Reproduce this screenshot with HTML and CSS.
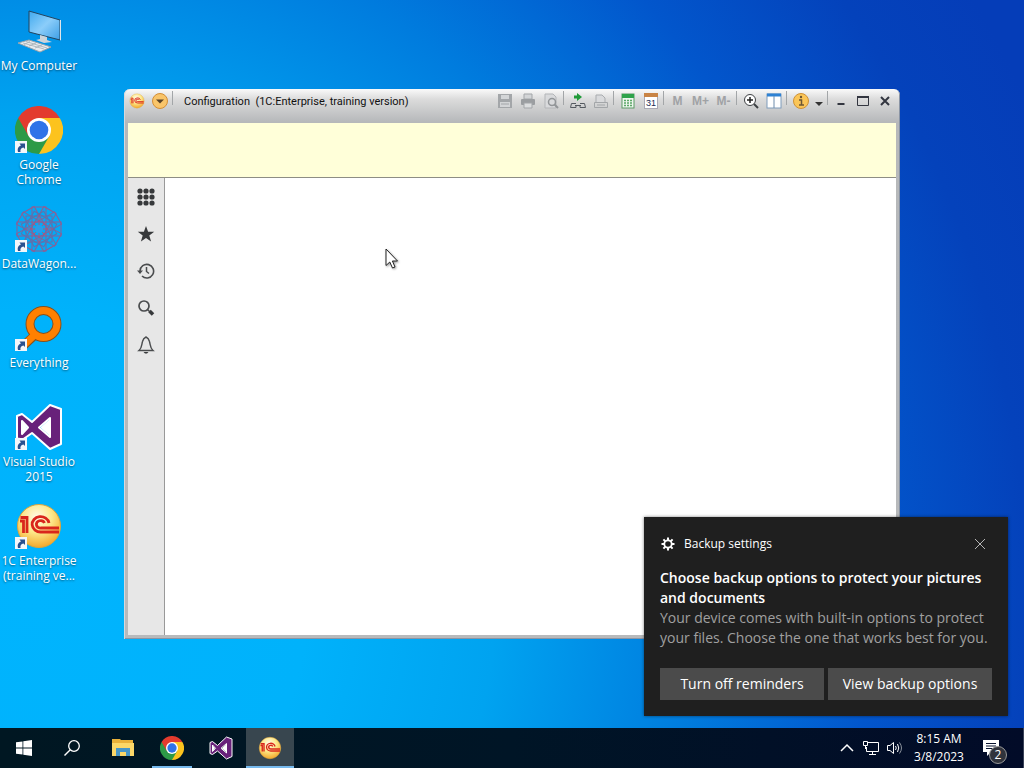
FILE: index.html
```
<!DOCTYPE html>
<html lang="en">
<head>
<meta charset="utf-8">
<meta name="viewport" content="width=device-width, initial-scale=1">
<title>Desktop</title>
<link rel="stylesheet" href="styles.css">
</head>
<body>
<!-- logos used more than once -->
<svg class="defs" aria-hidden="true">
  <defs>
    <linearGradient id="screen" x1="0" y1="0" x2="1" y2="1">
      <stop offset="0" stop-color="#3fa9ee"/><stop offset="0.5" stop-color="#8bcdfa"/><stop offset="1" stop-color="#3c9ee6"/>
    </linearGradient>
    <radialGradient id="gold" cx="0.45" cy="0.3" r="0.7">
      <stop offset="0" stop-color="#fffbe8"/><stop offset="0.5" stop-color="#fde88a"/><stop offset="1" stop-color="#f3a92c"/>
    </radialGradient>
  </defs>
  <symbol id="chrome" viewBox="0 0 48 48">
    <path d="M24 24 L3.2 12 A24 24 0 0 1 44.8 12 Z" fill="#e33b2e"/>
    <path d="M24 24 L44.8 12 A24 24 0 0 1 24 48 Z" fill="#fcc31e"/>
    <path d="M24 24 L24 48 A24 24 0 0 1 3.2 12 Z" fill="#2d9a47"/>
    <path d="M24 12 H44.8 L34 24 Z" fill="#fcc31e"/>
    <path d="M3.2 12 L13.6 30 L24 24 L24 12 Z" fill="#e33b2e"/>
    <path d="M34.4 30 L24 48 L18 34 Z" fill="#2d9a47"/>
    <circle cx="24" cy="24" r="12" fill="#fff"/>
    <circle cx="24" cy="24" r="9.3" fill="#2f73e8"/>
  </symbol>
  <symbol id="vs" viewBox="0 0 48 48">
    <path fill-rule="evenodd" d="M35 2 L46 6 V41 L35 46 L17 30 L7 37 L2 35 V13 L7 11 L17 19 Z M35 15 L24 24.500 L35 34 Z M7 18 V31 L13 24.500 Z" fill="#68217a" stroke="#fff" stroke-width="2" stroke-linejoin="round"/>
    <path d="M34 17 L25.500 24.500 L34 32 Z M7.500 19 V30 L12 24.500 Z" fill="#fff"/>
  </symbol>
  <symbol id="onec" viewBox="0 0 48 48">
    <circle cx="24" cy="24" r="21.500" fill="url(#gold)" stroke="#e0a53a" stroke-width="1"/>
    <path d="M5 19 H8.500 V31 M5.500 15.500 H12 V31" fill="none" stroke="#d9261c" stroke-width="2.800"/>
    <path d="M34 21 A8.500 7.700 0 1 0 26 30 H44 M29.500 21 A4.200 3.700 0 1 0 26 26 H44" fill="none" stroke="#d9261c" stroke-width="2.800"/>
  </symbol>
  <symbol id="shortcut" viewBox="0 0 12 12">
    <rect width="12" height="12" fill="#f3f6fa"/>
    <path d="M3 11 C2 7 4 5 6 4.500 L4.500 2.500 H10 V8 L8.500 6.500 C6 7 5 8.500 5.500 11 Z" fill="#29508f"/>
  </symbol>
</svg>

<main class="desktop">
  <nav class="icons">
    <button class="icon">
      <span class="pic"><svg viewBox="0 0 48 48">
        <path d="M14 4 L45 13 V33 L14 25 Z" fill="url(#screen)" stroke="#23445f" stroke-width="1"/>
        <path d="M45 13 L46 13 V33 L45 33.500 Z" fill="#dfe5ea"/>
        <path d="M25 28 L32 30 V33 L37 35 L29 36 L21 33 L25 32 Z" fill="#cdd4da"/>
        <path d="M3 36 L14 33 L36 40 L25 45 Z" fill="#e9ecef" stroke="#9ba4ab" stroke-width="1"/>
        <path d="M8 36 L29 42 M11 34.500 L32 41 M9 37.500 L15 34.500 M14 39 L21 36 M20 41 L27 38" stroke="#a5adb4" stroke-width="0.800"/>
      </svg></span>
      <span class="label">My Computer</span>
    </button>
    <button class="icon">
      <span class="pic"><svg><use href="#chrome"/></svg><svg class="arrow"><use href="#shortcut"/></svg></span>
      <span class="label">Google<br>Chrome</span>
    </button>
    <button class="icon">
      <span class="pic"><svg viewBox="0 0 48 48">
        <g fill="none" stroke="#8d5f93" stroke-width="1">
          <rect x="17" y="2" width="14" height="44"/>
          <rect x="17" y="2" width="14" height="44" transform="rotate(30 24 24)"/>
          <rect x="17" y="2" width="14" height="44" transform="rotate(60 24 24)"/>
          <rect x="17" y="2" width="14" height="44" transform="rotate(90 24 24)"/>
          <rect x="17" y="2" width="14" height="44" transform="rotate(120 24 24)"/>
          <rect x="17" y="2" width="14" height="44" transform="rotate(150 24 24)"/>
        </g>
        <g fill="none" stroke="#5c72ae" stroke-width="1">
          <rect x="11" y="11" width="26" height="26"/>
          <rect x="11" y="11" width="26" height="26" transform="rotate(30 24 24)"/>
          <rect x="11" y="11" width="26" height="26" transform="rotate(60 24 24)"/>
        </g>
        <path d="M17 17 L31 31 M31 17 L17 31 M24 10 V38 M10 24 H38" stroke="#b0567a" stroke-width="1"/>
        <circle cx="24" cy="24" r="4" fill="#2b9be8"/>
      </svg><svg class="arrow"><use href="#shortcut"/></svg></span>
      <span class="label">DataWagon...</span>
    </button>
    <button class="icon">
      <span class="pic"><svg viewBox="0 0 48 48">
        <circle cx="28.500" cy="20" r="13.500" fill="none" stroke="#87501c" stroke-width="9"/>
        <path d="M20 31 L7 43" stroke="#87501c" stroke-width="9"/>
        <circle cx="28.500" cy="20" r="13.500" fill="none" stroke="#ff8000" stroke-width="7"/>
        <path d="M20.500 30 L7 43" stroke="#ff8000" stroke-width="7"/>
      </svg><svg class="arrow"><use href="#shortcut"/></svg></span>
      <span class="label">Everything</span>
    </button>
    <button class="icon">
      <span class="pic"><svg><use href="#vs"/></svg><svg class="arrow"><use href="#shortcut"/></svg></span>
      <span class="label">Visual Studio<br>2015</span>
    </button>
    <button class="icon">
      <span class="pic"><svg><use href="#onec"/></svg><svg class="arrow"><use href="#shortcut"/></svg></span>
      <span class="label">1C Enterprise<br>(training ve...</span>
    </button>
  </nav>

  <section class="window">
    <header class="titlebar">
      <button class="tool" aria-label="1C"><svg><use href="#onec"/></svg></button>
      <button class="tool" aria-label="Menu"><svg viewBox="0 0 16 16"><circle cx="8" cy="8" r="7.500" fill="#f9c56a" stroke="#d38e35"/><path d="M4 6.500 H12 L8 10.500 Z" fill="#5b4326"/></svg></button>
      <span class="sep"></span>
      <h1 class="caption">Configuration&nbsp; (1C:Enterprise, training version)</h1>
      <button class="tool" aria-label="Save" disabled><svg viewBox="0 0 16 16"><path d="M1 1 H15 V15 H1 Z" fill="#a3a6a9"/><path d="M4 2 H12 V6 H4 Z M3 9 H13 V14 H3 Z" fill="#d3d5d7"/><path d="M4 11 H12" stroke="#a3a6a9"/></svg></button>
      <button class="tool" aria-label="Print" disabled><svg viewBox="0 0 16 16"><path d="M4 1 H12 V6 H4 Z" fill="#d3d5d7" stroke="#a3a6a9"/><rect x="1" y="6" width="14" height="6" rx="1" fill="#9b9ea1"/><path d="M4 10 H12 V15 H4 Z" fill="#dcdedf" stroke="#a3a6a9"/></svg></button>
      <button class="tool" aria-label="Preview" disabled><svg viewBox="0 0 16 16"><path d="M2 1 H10 L13 4 V15 H2 Z" fill="#d9dadc" stroke="#b3b5b8"/><circle cx="9" cy="9" r="3.500" fill="none" stroke="#929598" stroke-width="1.500"/><path d="M11.500 11.500 L15 15" stroke="#929598" stroke-width="2"/></svg></button>
      <span class="sep"></span>
      <button class="tool" aria-label="Go to link"><svg viewBox="0 0 16 16"><path d="M4 2.500 H7 V0 L12 4 L7 8 V5.500 H4 Z" fill="#1f9a38"/><path d="M6 10.500 H1.500 L0.500 14.500 H6 V12 M10 12 V14.500 H15.500 L14.500 10.500 H10 M5 12.500 H11" fill="none" stroke="#555a60"/></svg></button>
      <button class="tool" aria-label="Copy link" disabled><svg viewBox="0 0 16 16"><path d="M3 9 V2 H9 L12 5 V9" fill="#d9dadc" stroke="#a9acaf"/><path d="M1.500 9.500 H14.500 V14.500 H1.500 Z M4 12 H12" fill="none" stroke="#a3a6a9"/></svg></button>
      <span class="sep"></span>
      <button class="tool" aria-label="Calculator"><svg viewBox="0 0 16 16"><rect x="2" y="1" width="12" height="14" fill="#eef6ee" stroke="#5d9a66"/><rect x="2" y="1" width="12" height="4" fill="#2fa34b"/><path d="M4 7.500 H12 M4 10 H12 M4 12.500 H12" stroke="#5ca868" stroke-width="1.500" stroke-dasharray="2 1"/></svg></button>
      <button class="tool" aria-label="Calendar"><svg viewBox="0 0 16 16"><rect x="1.500" y="1" width="13" height="14.500" fill="#fff" stroke="#a9a9b5"/><rect x="1" y="0" width="14" height="4" fill="#c98445"/><text x="8" y="13" text-anchor="middle" class="day">31</text></svg></button>
      <span class="sep"></span>
      <button class="tool mem" disabled>M</button>
      <button class="tool mem" disabled>M+</button>
      <button class="tool mem" disabled>M-</button>
      <span class="sep"></span>
      <button class="tool" aria-label="Zoom"><svg viewBox="0 0 16 16"><circle cx="7" cy="7" r="5.500" fill="#fff" stroke="#3d4043"/><path d="M4 7 H10 M7 4 V10" stroke="#222" stroke-width="1.500"/><path d="M11 11 L15 15" stroke="#3d4043" stroke-width="2"/></svg></button>
      <button class="tool" aria-label="Panels"><svg viewBox="0 0 16 16"><rect x="1" y="1" width="14" height="14" fill="#fff" stroke="#7f9cbb"/><path d="M1 2 H15" stroke="#2e82d4" stroke-width="3"/><path d="M8 3 V15" stroke="#6e8cab"/></svg></button>
      <span class="sep"></span>
      <button class="tool" aria-label="About"><svg viewBox="0 0 16 16"><circle cx="8" cy="8" r="7.500" fill="#fbc658" stroke="#cf9136"/><path d="M6 7 H8.500 V12 M6 12 H11" fill="none" stroke="#6c5634" stroke-width="1.500"/><circle cx="8" cy="4" r="1.200" fill="#6c5634"/></svg></button>
      <button class="tool narrow" aria-label="More"><svg viewBox="0 0 14 16"><path d="M3 9 H11 L7 13 Z" fill="#333"/></svg></button>
      <span class="sep"></span>
      <button class="tool control" aria-label="Minimize"><svg viewBox="0 0 16 16"><path d="M4.500 11 H11.500" stroke="#333640" stroke-width="2"/></svg></button>
      <button class="tool control" aria-label="Maximize"><svg viewBox="0 0 16 16"><path d="M2.500 3.500 H13.500 V12.500 H2.500 Z" fill="none" stroke="#333640"/><path d="M2 4 H14" stroke="#333640" stroke-width="2"/></svg></button>
      <button class="tool control" aria-label="Close"><svg viewBox="0 0 16 16"><path d="M4 4 L12 12 M12 4 L4 12" stroke="#333640" stroke-width="2"/></svg></button>
    </header>
    <div class="banner"></div>
    <div class="work">
      <nav class="side">
        <button aria-label="Sections"><svg viewBox="0 0 18 18" fill="#37393b"><circle cx="3" cy="3" r="2.600"/><circle cx="9" cy="3" r="2.600"/><circle cx="15" cy="3" r="2.600"/><circle cx="3" cy="9" r="2.600"/><circle cx="9" cy="9" r="2.600"/><circle cx="15" cy="9" r="2.600"/><circle cx="3" cy="15" r="2.600"/><circle cx="9" cy="15" r="2.600"/><circle cx="15" cy="15" r="2.600"/></svg></button>
        <button aria-label="Favorites"><svg viewBox="0 0 18 18"><path d="M9 1 L11.100 6.800 H17.200 L12.300 10.500 L14.100 16.500 L9 12.900 L3.900 16.500 L5.700 10.500 L0.800 6.800 H6.900 Z" fill="#37393b"/></svg></button>
        <button aria-label="History"><svg viewBox="0 0 18 18"><path d="M3 9 A6.800 6.800 0 1 1 5 14" fill="none" stroke="#4a4c4e" stroke-width="1.600"/><path d="M0 8.500 H6 L3 12 Z" fill="#4a4c4e"/><path d="M9.500 5 V9.500 L12 11.500" fill="none" stroke="#4a4c4e" stroke-width="1.500"/></svg></button>
        <button aria-label="Search"><svg viewBox="0 0 18 18"><circle cx="7" cy="7" r="5" fill="none" stroke="#4a4c4e" stroke-width="1.700"/><path d="M10.500 10.500 L12.500 12.500" stroke="#4a4c4e" stroke-width="1.500"/><path d="M12.500 12 L16 15.500" stroke="#37393b" stroke-width="3.500"/></svg></button>
        <button aria-label="Notifications"><svg viewBox="0 0 18 18"><path d="M2 14.500 C5 12 4.500 9 5.500 5.500 C6 3.500 7 2 9 1 C11 2 12 3.500 12.500 5.500 C13.500 9 13 12 16 14.500 Z" fill="none" stroke="#4a4c4e" stroke-width="1.400"/><path d="M6.500 16 H11.500 L10 17.500 H8 Z" fill="#37393b"/></svg></button>
      </nav>
      <div class="content"></div>
    </div>
  </section>

  <aside class="toast">
    <div class="toast-head">
      <svg class="gear" viewBox="0 0 14 14"><circle cx="7" cy="7" r="3.700" fill="none" stroke="#fff" stroke-width="1.800"/><path d="M7 0.500 V3 M7 11 V13.500 M0.500 7 H3 M11 7 H13.500 M2.400 2.400 L4.200 4.200 M9.800 9.800 L11.600 11.600 M2.400 11.600 L4.200 9.800 M9.800 4.200 L11.600 2.400" stroke="#fff" stroke-width="2"/></svg>
      <span class="toast-app">Backup settings</span>
      <button class="toast-close" aria-label="Close"><svg viewBox="0 0 12 12"><path d="M1 1 L11 11 M11 1 L1 11" stroke="#b5b5b5"/></svg></button>
    </div>
    <h2>Choose backup options to protect your pictures and documents</h2>
    <p>Your device comes with built-in options to protect your files. Choose the one that works best for you.</p>
    <div class="toast-buttons">
      <button>Turn off reminders</button>
      <button>View backup options</button>
    </div>
  </aside>

  <svg class="cursor" viewBox="0 0 14 22"><path d="M1 1 V17.500 L4.800 14 L7.500 20 L10 19 L7.400 13 H12.500 Z" fill="#fff" stroke="#222"/></svg>
</main>

<footer class="taskbar">
  <button class="task" aria-label="Start"><svg class="small" viewBox="0 0 16 16"><path d="M0 2.300 L6.500 1.400 V7.600 H0 Z M7.300 1.300 L16 0 V7.600 H7.300 Z M0 8.400 H6.500 V14.600 L0 13.700 Z M7.300 8.400 H16 V16 L7.300 14.700 Z" fill="#fff"/></svg></button>
  <button class="task" aria-label="Search"><svg class="small" viewBox="0 0 16 16"><circle cx="10" cy="6" r="5.300" fill="none" stroke="#fff" stroke-width="1.300"/><path d="M6.300 9.700 L0.500 15.500" stroke="#fff" stroke-width="1.400"/></svg></button>
  <div class="apps">
    <button class="task" aria-label="File Explorer"><svg viewBox="0 0 24 24"><path d="M1 3 H9 L10 4 H22 V20 H1 Z" fill="#e9b13a"/><path d="M1 7 H23 V20 H1 Z" fill="#fbd768"/><path d="M5 12 H19 V20 H15 V16 H9 V20 H5 Z" fill="#4796c8"/></svg></button>
    <button class="task open" aria-label="Google Chrome"><svg><use href="#chrome"/></svg></button>
    <button class="task" aria-label="Visual Studio"><svg><use href="#vs"/></svg></button>
    <button class="task active" aria-label="1C Enterprise"><svg><use href="#onec"/></svg></button>
  </div>
  <div class="tray">
    <button aria-label="Show hidden icons"><svg viewBox="0 0 16 16"><path d="M2 11 L8 5 L14 11" fill="none" stroke="#fff" stroke-width="1.500"/></svg></button>
    <button aria-label="Network"><svg viewBox="0 0 16 16"><path d="M5 2.500 H15.500 V11.500 H3.500 V7 M9.500 12 V14.500 M6 14.500 H13" fill="none" stroke="#fff"/><path d="M0.500 1.500 H4.500 V5.500 H0.500 Z M2.500 6 V9" fill="none" stroke="#fff"/></svg></button>
    <button aria-label="Volume"><svg viewBox="0 0 16 16"><path d="M0.500 5.500 H3 L6.500 2.500 V13.500 L3 10.500 H0.500 Z M8.500 6 Q10 8 8.500 10 M10.500 4 Q13 8 10.500 12" fill="none" stroke="#fff"/><path d="M12.500 2.500 Q16.500 8 12.500 13.500" fill="none" stroke="#8b929c"/></svg></button>
    <time class="clock">8:15 AM<br>3/8/2023</time>
    <button class="notes" aria-label="Notifications"><svg viewBox="0 0 16 16"><path d="M0 0 H16 V12 H8 L4 16 V12 H0 Z" fill="#fff"/><path d="M3 3.500 H13 M3 6 H13 M3 8.500 H10" stroke="#0a1530"/></svg><span class="badge">2</span></button>
  </div>
</footer>
</body>
</html>
```

FILE: styles.css
```
* {
  box-sizing: border-box;
}
body {
  margin: 0;
  height: 100vh;
  display: flex;
  flex-direction: column;
  overflow: hidden;
  font-family: "Open Sans", "Noto Sans", sans-serif;
  font-size: 12px;
  color: #fff;
  background: radial-gradient(ellipse 108% 150% at 3% 78%, #00b4fe 0%, #00b2fb 25%, #00a3f0 42%, #007cde 60%, #0256cc 76%, #0442bb 90%, #053db8 100%);
}
button {
  margin: 0;
  padding: 0;
  border: none;
  background: none;
  font: inherit;
  color: inherit;
}
svg {
  display: block;
}
.defs {
  position: absolute;
  width: 0;
  height: 0;
}
/* Desktop */
.desktop {
  flex: 1;
  min-height: 0;
  position: relative;
}
.icons {
  width: 78px;
}
.icon {
  display: flex;
  flex-direction: column;
  align-items: center;
  gap: 3px;
  width: 100%;
  height: 99px;
  padding-top: 7px;
}
.pic {
  position: relative;
}
.pic svg {
  width: 48px;
  height: 48px;
}
.pic .arrow {
  position: absolute;
  left: 0;
  bottom: 1px;
  width: 12px;
  height: 12px;
}
.label {
  line-height: 15px;
  white-space: nowrap;
  text-shadow: 0 1px 2px rgba(0, 0, 0, 0.5);
}
/* Application window */
.window {
  position: absolute;
  top: 89px;
  left: 124px;
  width: 776px;
  height: 550px;
  display: flex;
  flex-direction: column;
  padding: 0 4px 4px;
  border-radius: 6px 6px 0 0;
  background: linear-gradient(#fafafa 0, #dcdcdc 10px, #b6b8ba 33px, #b8babc 100%);
  box-shadow: inset 1px 0 #d6d8dc, inset -1px -1px #8a94a4;
}
.titlebar {
  display: flex;
  align-items: center;
  height: 34px;
  margin-left: -3px;
  padding-bottom: 10px;
  color: #111;
}
.tool {
  width: 23px;
  flex: none;
}
.tool svg {
  width: 16px;
  height: 16px;
  margin: 0 auto;
}
.control {
  width: 22px;
}
.narrow,
.narrow svg {
  width: 14px;
}
.mem {
  color: #a0a2a5;
  font: bold 12px "Liberation Sans", sans-serif;
}
.day {
  font: 9px "Liberation Sans", sans-serif;
  fill: #222a55;
}
.sep {
  width: 1px;
  height: 14px;
  margin: 0 2px 6px 1px;
  background: #a3a6a8;
}
.caption {
  flex: 1;
  margin: 0 0 0 9px;
  font: 11px Roboto, sans-serif;
}
.banner {
  height: 55px;
  background: #ffffd9;
  border-bottom: 1px solid #8d8d84;
}
.work {
  flex: 1;
  display: flex;
}
.side {
  display: flex;
  flex-direction: column;
  width: 37px;
  background: #e7e7e7;
  border-right: 1px solid #999;
}
.side button {
  height: 37px;
}
.side svg {
  width: 18px;
  height: 18px;
  margin: 0 auto;
}
.content {
  flex: 1;
  background: #fff;
}
.cursor {
  position: absolute;
  top: 248px;
  left: 385px;
  width: 14px;
  height: 22px;
  filter: drop-shadow(1px 1px 1px rgba(0, 0, 0, 0.4));
}
/* Notification */
.toast {
  position: absolute;
  right: 16px;
  bottom: 12px;
  width: 364px;
  padding: 16px;
  background: #1f1f1f;
  font-size: 14px;
  line-height: 20px;
  box-shadow: 0 0 3px rgba(0, 0, 0, 0.5);
}
.toast-head {
  display: flex;
  align-items: center;
  height: 22px;
  margin-bottom: 13px;
  padding: 0 6px 0 1px;
}
.gear {
  width: 14px;
  height: 14px;
}
.toast-app {
  flex: 1;
  margin-left: 9px;
  font-size: 12px;
}
.toast-close svg {
  width: 12px;
  height: 12px;
}
.toast h2 {
  margin: 0;
  font-size: 14px;
  font-weight: 600;
}
.toast p {
  margin: 0;
  color: #a0a0a0;
}
.toast-buttons {
  display: flex;
  gap: 4px;
  margin-top: 20px;
}
.toast-buttons button {
  flex: 1;
  height: 32px;
  background: #4b4b4b;
}
/* Taskbar */
.taskbar {
  display: flex;
  height: 40px;
  background: linear-gradient(90deg, #001722, #001526 50%, #020b28);
}
.task {
  display: flex;
  align-items: center;
  justify-content: center;
  width: 48px;
  height: 40px;
}
.task svg {
  width: 24px;
  height: 24px;
}
.task .small {
  width: 16px;
  height: 16px;
}
.apps {
  display: flex;
  gap: 1px;
  margin-left: 3px;
}
.open {
  background: linear-gradient(#76b9ed, #76b9ed) bottom / 40px 2px no-repeat;
}
.active {
  background: linear-gradient(#76b9ed, #76b9ed) bottom / 48px 2px no-repeat #38464f;
}
.tray {
  display: flex;
  align-items: center;
  gap: 8px;
  margin-left: auto;
  padding-right: 8px;
  border-right: 1px solid #3a4258;
}
.tray svg {
  width: 16px;
  height: 16px;
}
.clock {
  width: 56px;
  line-height: 18px;
  text-align: center;
}
.notes {
  position: relative;
  width: 40px;
  padding-left: 8px;
}
.badge {
  position: absolute;
  top: 6px;
  left: 14px;
  width: 18px;
  border: 1px solid #999;
  border-radius: 50%;
  background: #30333c;
  line-height: 16px;
}
```
